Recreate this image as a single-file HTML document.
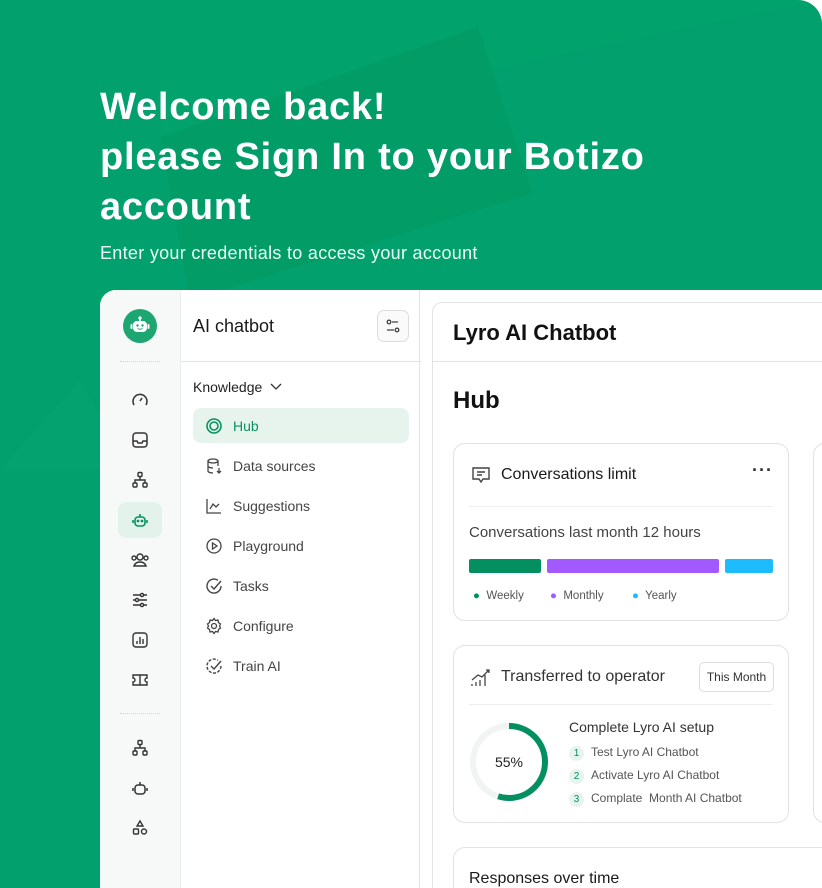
<!DOCTYPE html>
<html><head><meta charset="utf-8"><style>
*{box-sizing:border-box;margin:0;padding:0}
html,body{width:822px;height:888px;overflow:hidden}
body{background:#fff;font-family:"Liberation Sans",sans-serif;position:relative}
.bg{position:absolute;left:0;top:0;width:822px;height:888px;background:#02a06c;border-top-right-radius:24px;overflow:hidden}
h1{position:absolute;left:100px;top:82px;color:#fff;font-size:38px;line-height:50px;font-weight:bold;letter-spacing:0.8px}
.sub{position:absolute;left:100px;top:243px;color:#eafff5;font-size:18px;letter-spacing:0.3px}
.card{position:absolute;left:100px;top:290px;width:722px;height:598px;background:#fff;border-top-left-radius:16px;overflow:hidden}
.side{position:absolute;left:0;top:0;width:80px;height:100%;background:#f7f9f8}
.col{position:absolute;left:80px;top:0;width:240px;height:100%;border-right:1px solid #e4e4e4;border-left:1px solid #ececec}
.ic{position:absolute;left:30px;width:20px;height:20px}
.dot{position:absolute;left:20px;width:40px;border-top:1px dotted #cfd6d2}
.t{position:absolute;color:#222;font-size:14px}
.nav{position:absolute;left:12px;width:216px;height:35px;font-size:14px;color:#444;display:flex;align-items:center;padding-left:12px;border-radius:8px}
.nav svg{width:18px;height:18px;margin-right:10px}
.panel{position:absolute;left:332px;top:12px;width:420px;height:640px;border:1px solid #e3e3e3;border-radius:10px}
.box{position:absolute;border:1px solid #e2e2e2;border-radius:12px;background:#fff}
</style></head><body>
<div class="bg">
<svg width="822" height="888" style="position:absolute;left:0;top:0">
<polygon points="160,0 822,0 822,0 160,140" fill="#03a470" opacity="0.4"/>
<polygon points="160,137 478,27 532,193 190,300" fill="#019862" opacity="0.5"/>
<polygon points="0,470 80,380 130,470" fill="#06a873" opacity="0.3"/>
</svg>
</div>
<h1>Welcome back!<br>please Sign In to your Botizo<br>account</h1>
<div class="sub">Enter your credentials to access your account</div>
<div class="card">
 <div class="side">
  <svg style="position:absolute;left:23px;top:19px" width="34" height="34" viewBox="0 0 34 34"><circle cx="17" cy="17" r="17" fill="#1ba672"/><rect x="10" y="12" width="14" height="11" rx="4" fill="#fff"/><circle cx="17" cy="9" r="1.6" fill="#fff"/><line x1="17" y1="9" x2="17" y2="12" stroke="#fff" stroke-width="1.5"/><rect x="7.5" y="15" width="2" height="5" rx="1" fill="#fff"/><rect x="24.5" y="15" width="2" height="5" rx="1" fill="#fff"/><circle cx="14.5" cy="16.5" r="1.2" fill="#1ba672"/><circle cx="19.5" cy="16.5" r="1.2" fill="#1ba672"/><path d="M14.5 19.5q2.5 1.5 5 0" stroke="#1ba672" fill="none" stroke-width="1"/></svg>
  <div class="dot" style="top:71px"></div>
  <svg class="ic" style="top:100px" viewBox="0 0 20 20" fill="none" stroke="#333" stroke-width="1.5"><path d="M4 15a7 7 0 1 1 12 0"/><path d="M10 11l2-3"/></svg>
  <svg class="ic" style="top:140px" viewBox="0 0 20 20" fill="none" stroke="#333" stroke-width="1.5"><rect x="3" y="3" width="14" height="14" rx="3"/><path d="M3 11h4l1 2h4l1-2h4"/></svg>
  <svg class="ic" style="top:180px" viewBox="0 0 20 20" fill="none" stroke="#333" stroke-width="1.4"><rect x="8" y="2.5" width="4" height="4" rx="1"/><rect x="3" y="13" width="4" height="4" rx="1"/><rect x="13" y="13" width="4" height="4" rx="1"/><path d="M10 6.5v3M5 13v-3h10v3"/></svg>
  <div style="position:absolute;left:18px;top:212px;width:44px;height:36px;border-radius:8px;background:#e3f3ec"></div>
  <svg class="ic" style="top:220px" viewBox="0 0 20 20" fill="none" stroke="#07935f" stroke-width="1.6"><rect x="5" y="7" width="10" height="9" rx="3"/><path d="M10 4v3M3 10v3M17 10v3"/><circle cx="8" cy="11" r=".6" fill="#07935f"/><circle cx="12" cy="11" r=".6" fill="#07935f"/></svg>
  <svg class="ic" style="top:260px" viewBox="0 0 20 20" fill="none" stroke="#333" stroke-width="1.4"><circle cx="10" cy="7" r="3"/><path d="M4 16c1-3 3-4 6-4s5 1 6 4z"/><circle cx="4" cy="8" r="2"/><circle cx="16" cy="8" r="2"/></svg>
  <svg class="ic" style="top:300px" viewBox="0 0 20 20" fill="none" stroke="#333" stroke-width="1.4"><path d="M3 5h14M3 10h14M3 15h14"/><circle cx="12" cy="5" r="1.6" fill="#f7f9f8"/><circle cx="7" cy="10" r="1.6" fill="#f7f9f8"/><circle cx="12" cy="15" r="1.6" fill="#f7f9f8"/></svg>
  <svg class="ic" style="top:340px" viewBox="0 0 20 20" fill="none" stroke="#333" stroke-width="1.4"><rect x="3" y="3" width="14" height="14" rx="3"/><path d="M7 14v-3M10 14V7M13 14v-5"/></svg>
  <svg class="ic" style="top:380px" viewBox="0 0 20 20" fill="none" stroke="#333" stroke-width="1.4"><path d="M3 5h14v3a2 2 0 0 0 0 4v3H3v-3a2 2 0 0 0 0-4z"/><path d="M10 5v10"/></svg>
  <div class="dot" style="top:423px"></div>
  <svg class="ic" style="top:448px" viewBox="0 0 20 20" fill="none" stroke="#333" stroke-width="1.4"><rect x="8" y="2.5" width="4" height="4" rx="1"/><rect x="3" y="13" width="4" height="4" rx="1"/><rect x="13" y="13" width="4" height="4" rx="1"/><path d="M10 6.5v3M5 13v-3h10v3"/></svg>
  <svg class="ic" style="top:488px" viewBox="0 0 20 20" fill="none" stroke="#333" stroke-width="1.5"><rect x="5" y="7" width="10" height="9" rx="3"/><path d="M10 4v3M3 10v3M17 10v3"/></svg>
  <svg class="ic" style="top:528px" viewBox="0 0 20 20" fill="none" stroke="#333" stroke-width="1.4"><path d="M10 3l3 5H7z"/><rect x="3.5" y="11" width="5" height="5" rx="1"/><circle cx="14" cy="13.5" r="2.5"/></svg>
 </div>
 <div class="col">
  <div class="t" style="left:12px;top:26px;font-size:18px;color:#1a1a1a">AI chatbot</div>
  <div style="position:absolute;left:196px;top:20px;width:32px;height:32px;border:1px solid #ddd;border-radius:7px;background:#fafafa"><svg width="30" height="30" viewBox="0 0 30 30" fill="none" stroke="#444" stroke-width="1.3"><circle cx="11" cy="11" r="1.8"/><path d="M14 11h6M9 19h7"/><circle cx="19" cy="19" r="1.8"/></svg></div>
  <div style="position:absolute;left:0;top:71px;width:240px;border-top:1px solid #e4e4e4"></div>
  <div class="t" style="left:12px;top:89px;font-size:14px">Knowledge <svg width="12" height="10" viewBox="0 0 12 10" style="margin-left:4px"><path d="M1 2l5 5 5-5" fill="none" stroke="#333" stroke-width="1.3"/></svg></div>
  <div class="nav" style="top:118px;background:#e7f4ee;color:#07935f"><svg viewBox="0 0 18 18" fill="none" stroke="#07935f" stroke-width="1.6"><circle cx="9" cy="9" r="7"/><circle cx="9" cy="9" r="4"/></svg>Hub</div>
  <div class="nav" style="top:158px"><svg viewBox="0 0 18 18" fill="none" stroke="#444" stroke-width="1.3"><ellipse cx="8" cy="4" rx="5" ry="2"/><path d="M3 4v10c0 1 2 2 5 2M13 4v5M3 9c0 1 2 2 5 2M14 11v5M12 14l2 2 2-2"/></svg>Data sources</div>
  <div class="nav" style="top:198px"><svg viewBox="0 0 18 18" fill="none" stroke="#444" stroke-width="1.3"><path d="M2 2v14h14M5 12l3-5 3 3 3-3"/></svg>Suggestions</div>
  <div class="nav" style="top:238px"><svg viewBox="0 0 18 18" fill="none" stroke="#444" stroke-width="1.3"><circle cx="9" cy="9" r="7"/><path d="M7.5 6v6l4.5-3z"/></svg>Playground</div>
  <div class="nav" style="top:278px"><svg viewBox="0 0 18 18" fill="none" stroke="#444" stroke-width="1.4"><path d="M16 9a7 7 0 1 1-3-5.7"/><path d="M6 9l3 3 7-8"/></svg>Tasks</div>
  <div class="nav" style="top:318px"><svg viewBox="0 0 18 18" fill="none" stroke="#444" stroke-width="1.3"><circle cx="9" cy="9" r="2.5"/><path d="M9 1.5l1.5 2 2.5-.5.5 2.5 2 1.5-1 2 1 2-2 1.5-.5 2.5-2.5-.5-1.5 2-1.5-2-2.5.5-.5-2.5-2-1.5 1-2-1-2 2-1.5.5-2.5 2.5.5z"/></svg>Configure</div>
  <div class="nav" style="top:358px"><svg viewBox="0 0 18 18" fill="none" stroke="#444" stroke-width="1.4"><path d="M16 9a7 7 0 1 1-3-5.7" stroke-dasharray="3 1.5"/><path d="M6 9l3 3 7-8"/></svg>Train AI</div>
 </div>
 <div class="panel">
  <div class="t" style="left:20px;top:17px;font-size:22px;font-weight:bold;color:#111">Lyro AI Chatbot</div>
  <div style="position:absolute;left:0;top:58px;width:100%;border-top:1px solid #e3e3e3"></div>
  <div class="t" style="left:20px;top:84px;font-size:24px;font-weight:bold;color:#111">Hub</div>
  <div class="box" style="left:20px;top:140px;width:336px;height:178px">
   <svg style="position:absolute;left:16px;top:20px" width="22" height="22" viewBox="0 0 22 22" fill="none" stroke="#444" stroke-width="1.4"><path d="M3 4h16v11h-6l-2 3-2-3H3z"/><path d="M7 8h8M7 11h5"/></svg>
   <div class="t" style="left:47px;top:22px;font-size:16px;color:#1a1a1a">Conversations limit</div>
   <div class="t" style="left:298px;top:16px;font-size:18px;font-weight:bold;color:#333;letter-spacing:1px">···</div>
   <div style="position:absolute;left:15px;top:62px;width:304px;border-top:1px solid #eee"></div>
   <div class="t" style="left:15px;top:80px;font-size:15px;color:#444">Conversations last month 12 hours</div>
   <div style="position:absolute;left:15px;top:115px;width:72px;height:14px;background:#038f5f;border-radius:2px"></div>
   <div style="position:absolute;left:93px;top:115px;width:172px;height:14px;background:#a259ff;border-radius:2px"></div>
   <div style="position:absolute;left:271px;top:115px;width:48px;height:14px;background:#1cbcff;border-radius:2px"></div>
   <div class="t" style="left:19px;top:146px;font-size:11.5px;color:#555"><span style="color:#038f5f">●</span>&nbsp; Weekly</div>
   <div class="t" style="left:96px;top:146px;font-size:11.5px;color:#555"><span style="color:#a259ff">●</span>&nbsp; Monthly</div>
   <div class="t" style="left:178px;top:146px;font-size:11.5px;color:#555"><span style="color:#1cbcff">●</span>&nbsp; Yearly</div>
  </div>
  <div class="box" style="left:20px;top:342px;width:336px;height:178px">
   <svg style="position:absolute;left:16px;top:20px" width="22" height="22" viewBox="0 0 22 22" fill="none" stroke="#444" stroke-width="1.3"><path d="M2 20v-2M6 20v-4M10 20v-6M15 20V9M2 14l6-5 4 2 7-7M16 4h3v3"/></svg>
   <div class="t" style="left:47px;top:22px;font-size:16px;color:#333">Transferred to operator</div>
   <div style="position:absolute;left:245px;top:16px;width:75px;height:30px;border:1px solid #ddd;border-radius:5px;font-size:12px;color:#333;text-align:center;line-height:28px">This Month</div>
   <div style="position:absolute;left:15px;top:58px;width:304px;border-top:1px solid #eee"></div>
   <svg style="position:absolute;left:15px;top:76px" width="80" height="80" viewBox="0 0 80 80"><circle cx="40" cy="40" r="36" fill="none" stroke="#f1f4f2" stroke-width="6"/><circle cx="40" cy="40" r="36" fill="none" stroke="#038f5f" stroke-width="6" stroke-dasharray="124 300" transform="rotate(-90 40 40)"/><text x="40" y="45" text-anchor="middle" font-family="Liberation Sans" font-size="14" fill="#222">55%</text></svg>
   <div class="t" style="left:115px;top:73px;font-size:14px;color:#333">Complete Lyro AI setup</div>
   <div class="t" style="left:115px;top:99px;font-size:12px;color:#555"><span style="display:inline-block;width:15px;height:15px;border-radius:50%;background:#e6f4ed;color:#038f5f;font-size:10px;text-align:center;line-height:15px;margin-right:7px">1</span>Test Lyro AI Chatbot</div>
   <div class="t" style="left:115px;top:122px;font-size:12px;color:#555"><span style="display:inline-block;width:15px;height:15px;border-radius:50%;background:#e6f4ed;color:#038f5f;font-size:10px;text-align:center;line-height:15px;margin-right:7px">2</span>Activate Lyro AI Chatbot</div>
   <div class="t" style="left:115px;top:145px;font-size:12px;color:#555"><span style="display:inline-block;width:15px;height:15px;border-radius:50%;background:#e6f4ed;color:#038f5f;font-size:10px;text-align:center;line-height:15px;margin-right:7px">3</span>Complate&nbsp; Month AI Chatbot</div>
  </div>
  <div class="box" style="left:380px;top:140px;width:100px;height:380px"></div>
  <div class="box" style="left:20px;top:544px;width:420px;height:120px">
   <div class="t" style="left:15px;top:22px;font-size:16px;color:#1a1a1a">Responses over time</div>
  </div>
 </div>
</div>
</body></html>
